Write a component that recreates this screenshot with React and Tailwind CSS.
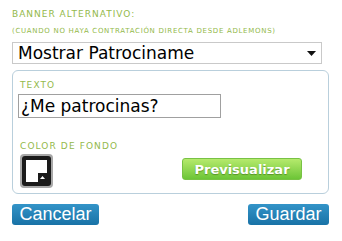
import React from 'react';

const App = () => {
  return (
    <div className="w-[342px] h-[241px] bg-white relative overflow-hidden" style={{ fontFamily: '"DejaVu Sans", Verdana, sans-serif' }}>
      <div className="pl-[12px] pr-[13px] pt-[9px]">
        {/* Header labels */}
        <div className="text-[9px] leading-[10px] tracking-[1px] text-[#93b94a]">BANNER ALTERNATIVO:</div>
        <div className="mt-[8px] text-[7px] leading-[8px] tracking-[0.7px] text-[#93b94a]">(CUANDO NO HAYA CONTRATACIÓN DIRECTA DESDE ADLEMONS)</div>

        {/* Select */}
        <div className="mt-[7px] w-[310px] h-[22px] border border-[#c9c9c9] flex items-center justify-between pl-[5px] pr-[4px]">
          <span className="text-[17px] leading-none text-black">Mostrar Patrociname</span>
          <svg width="9" height="5" viewBox="0 0 9 5" className="mr-[1px]">
            <path d="M0 0 H9 L4.5 5 Z" fill="#111" />
          </svg>
        </div>

        {/* Fieldset */}
        <div className="mt-[6px] w-[317px] h-[124px] border border-[#b9cfdc] rounded-[6px] px-[5px] pt-[9px]">
          <div className="pl-[2px] text-[9px] leading-[10px] tracking-[1.1px] text-[#93b94a]">TEXTO</div>
          <div className="mt-[4px] w-[203px] h-[24px] border border-[#a0a0a0] flex items-center pl-[2px]">
            <span className="text-[17px] leading-none text-black">¿Me patrocinas?</span>
          </div>

          <div className="mt-[23px] pl-[2px] text-[9px] leading-[10px] tracking-[1.1px] text-[#93b94a]">COLOR DE FONDO</div>

          <div className="mt-[3px] flex items-start">
            {/* color swatch */}
            <div className="ml-[2px] w-[33px] h-[34px] rounded-[4px] bg-[#a8a8a8] p-[2px]">
              <div className="w-full h-full rounded-[3px] bg-[#1a1a1a] p-[4px]">
                <div className="w-full h-full bg-white relative">
                  <div className="absolute right-0 bottom-0 w-[9px] h-[9px] bg-[#1a1a1a] flex items-center justify-center">
                    <svg width="5" height="3" viewBox="0 0 5 3">
                      <path d="M0 3 L2.5 0 L5 3 Z" fill="#fff" />
                    </svg>
                  </div>
                </div>
              </div>
            </div>

            <button className="ml-[129px] mt-[4px] w-[120px] h-[22px] rounded-[3px] bg-gradient-to-b from-[#b5ea6c] to-[#6cc536] border border-[#78c244] text-white text-[13px] font-bold leading-none flex items-center justify-center [text-shadow:0_1px_1px_rgba(60,110,20,0.6)]" style={{ fontFamily: '"DejaVu Sans", Verdana, sans-serif' }}>
              Previsualizar
            </button>
          </div>
        </div>

        {/* Bottom buttons */}
        <div className="mt-[10px] w-[317px] flex justify-between">
          <button className="w-[87px] h-[21px] rounded-[3px] bg-gradient-to-b from-[#3394c8] to-[#1872a6] text-white text-[18px] leading-none flex items-center justify-center pb-[1px]" style={{ fontFamily: '"Liberation Sans", Arial, sans-serif' }}>
            Cancelar
          </button>
          <button className="w-[81px] h-[21px] rounded-[3px] bg-gradient-to-b from-[#3394c8] to-[#1872a6] text-white text-[18px] leading-none flex items-center justify-center pb-[1px]" style={{ fontFamily: '"Liberation Sans", Arial, sans-serif' }}>
            Guardar
          </button>
        </div>
      </div>
    </div>
  );
};

export default App;
